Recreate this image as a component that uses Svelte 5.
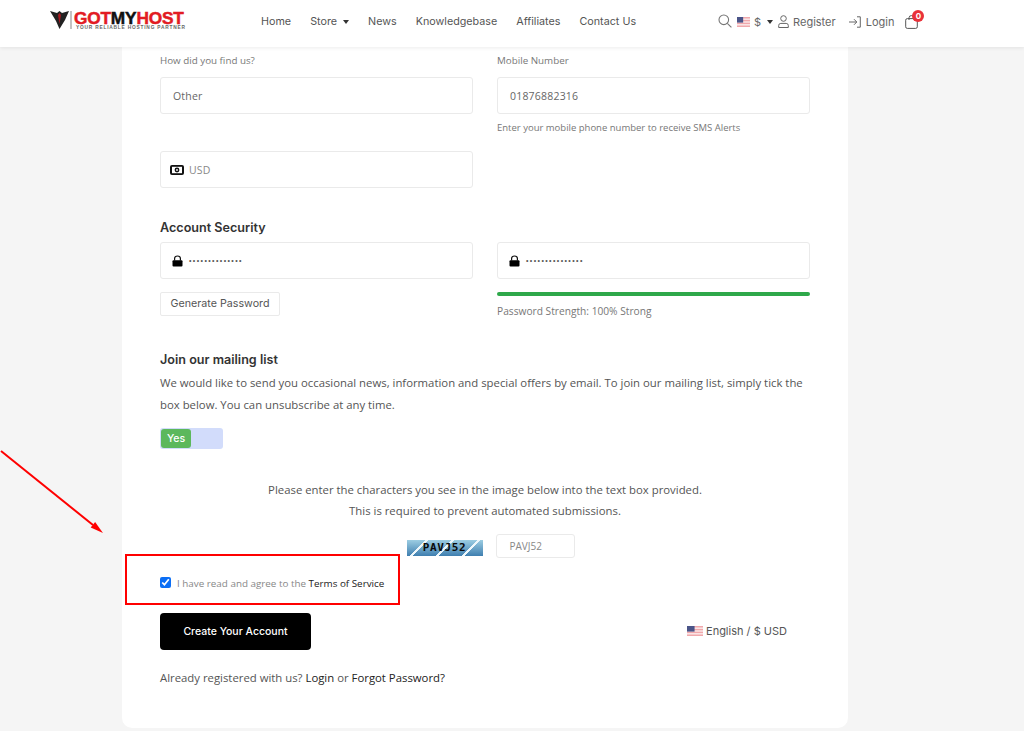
<script>
  const nav = ['Home', 'Store', 'News', 'Knowledgebase', 'Affiliates', 'Contact Us'];
</script>

<svelte:head><title>Register</title></svelte:head>

{#snippet flag(w, h)}
  <svg class="flag" width={w} height={h} viewBox="0 0 19 10" preserveAspectRatio="none">
    <rect width="19" height="10" fill="#f0a8ac"/>
    <rect y="1.5" width="19" height="1.4" fill="#fbe9ea"/>
    <rect y="4.3" width="19" height="1.4" fill="#fbe9ea"/>
    <rect y="7.1" width="19" height="1.4" fill="#fbe9ea"/>
    <rect width="9" height="5.6" fill="#4a5488"/>
  </svg>
{/snippet}

{#snippet lock()}
  <svg width="11" height="12" viewBox="0 0 11 12"><path d="M2.6 5.5 V3.6 Q2.6 1 5.5 1 Q8.4 1 8.4 3.6 V5.5" fill="none" stroke="#111" stroke-width="1.2"/><rect x=".5" y="5.2" width="10" height="6.3" rx="1" fill="#000"/></svg>
{/snippet}

<div class="page">
  <header>
    <div class="logo">
      <svg width="22" height="20" viewBox="0 0 22 20">
        <path d="M0 1 L7 3 L9.500 1 L12 3 L19 1 L15 10 L9.500 19 L6 11 Z" fill="#222"/>
        <path d="M8 5 L9.500 3 L11 5 L9.500 14 Z" fill="#a81a20"/>
        <rect x="20.500" y="1" width="1" height="18" fill="#888"/>
      </svg>
      <div class="wordmark">
        <div class="name"><span class="r">GOT</span><span class="k">MY</span><span class="r">HOST</span></div>
        <div class="tag">YOUR RELIABLE HOSTING PARTNER</div>
      </div>
    </div>
    <nav>
      {#each nav as item}
        <span class="nav-item">{item}{#if item === 'Store'}<i class="caret"></i>{/if}</span>
      {/each}
    </nav>
    <div class="tools">
      <svg class="search" width="14" height="14" viewBox="0 0 14 14" fill="none" stroke="#777" stroke-width="1.1"><circle cx="5.8" cy="5.8" r="4.8"/><path d="M9.3 9.3 L13.4 13.4"/></svg>
      <span class="cur">{@render flag(13, 10)}<span>$</span><i class="caret"></i></span>
      <span class="tool reg">
        <svg width="11" height="13" viewBox="0 0 11 13" fill="none" stroke="#666" stroke-width="1"><circle cx="5.5" cy="3.5" r="2.8"/><path d="M.7 12.5 V10.5 Q.7 8.4 2.8 8.4 H8.2 Q10.3 8.4 10.3 10.5 V12.5 Z"/></svg>
        Register
      </span>
      <span class="tool login">
        <svg width="12" height="12" viewBox="0 0 12 12" fill="none" stroke="#666" stroke-width="1"><path d="M0 6 H7.5 M5 3.2 L7.8 6 L5 8.8 M8 .8 H11.3 V11.2 H8"/></svg>
        Login
      </span>
      <span class="cart">
        <svg width="13" height="14" viewBox="0 0 13 14" fill="none" stroke="#555" stroke-width="1"><rect x=".7" y="3.6" width="11.6" height="9.8" rx="1.6"/><path d="M4 5 V2.8 Q4 .6 6.5 .6 Q9 .6 9 2.8 V5"/></svg>
        <b class="badge">0</b>
      </span>
    </div>
  </header>

  <main class="card">
    <div class="grid two first">
      <div>
        <div class="label">How did you find us?</div>
        <div class="input">Other</div>
      </div>
      <div>
        <div class="label">Mobile Number</div>
        <div class="input">01876882316</div>
        <div class="help">Enter your mobile phone number to receive SMS Alerts</div>
      </div>
    </div>

    <div class="grid two usd-row">
      <div class="input icon muted">
        <svg width="14" height="10" viewBox="0 0 14 10"><rect width="14" height="10" rx="2" fill="#111"/><rect x="2" y="1.800" width="10" height="6.400" fill="#fff"/><circle cx="7" cy="5" r="2.400" fill="#111"/><circle cx="7" cy="5" r=".9" fill="#fff"/></svg>
        USD
      </div>
    </div>

    <h3 class="security">Account Security</h3>
    <div class="grid two">
      <div>
        <div class="input icon pw">
          {@render lock()}
          <span class="dots">••••••••••••••</span>
        </div>
        <div class="gen">Generate Password</div>
      </div>
      <div>
        <div class="input icon pw">
          {@render lock()}
          <span class="dots">•••••••••••••••</span>
        </div>
        <div class="bar"></div>
        <div class="strength">Password Strength: 100% Strong</div>
      </div>
    </div>

    <h3 class="mailing">Join our mailing list</h3>
    <p class="para">We would like to send you occasional news, information and special offers by email. To join our mailing list, simply tick the box below. You can unsubscribe at any time.</p>
    <div class="toggle"><span>Yes</span></div>

    <div class="prompt">
      <div>Please enter the characters you see in the image below into the text box provided.</div>
      <div>This is required to prevent automated submissions.</div>
    </div>

    <div class="captcha">
      <div class="cap-img"><span>PAVJ52</span></div>
      <div class="cap-input">PAVJ52</div>
    </div>

    <label class="tos">
      <input type="checkbox" checked />
      <span>I have read and agree to the <em>Terms of Service</em></span>
    </label>

    <div class="actions">
      <div class="create">Create Your Account</div>
      <div class="lang">{@render flag(16, 10)}<span>English / $ USD</span></div>
    </div>

    <div class="already">Already registered with us? <em>Login</em> or <em>Forgot Password?</em></div>
  </main>

  <div class="mark-box"></div>
  <svg class="arrow" width="110" height="90" viewBox="0 0 110 90">
    <path d="M1 1 L93 75" stroke="#f00" stroke-width="2"/>
    <path d="M103 83 L90.700 77.500 L95.100 72.100 Z" fill="#f00"/>
  </svg>
</div>

<style>
  :global(body) { margin: 0; background: #f5f5f5; }
  .page {
    position: relative;
    height: 731px;
    overflow: hidden;
    background: #f5f5f5;
    font-family: "Open Sans", sans-serif;
    color: #555;
  }
  header {
    height: 47px;
    background: #fff;
    box-shadow: 0 1px 4px rgba(0,0,0,.08);
    display: flex;
    align-items: center;
    padding-left: 50px;
    padding-bottom: 4px;
    box-sizing: border-box;
    font-family: Inter, sans-serif;
    position: relative;
    z-index: 1;
  }
  .logo { display: flex; align-items: center; gap: 2px; width: 211px; flex: none; margin-top: -3px; }
  .wordmark { line-height: 1; }
  .name { font: 900 17.3px/14px "Liberation Sans", sans-serif; -webkit-text-stroke: .5px; letter-spacing: -.2px; }
  .r { color: #e21b23; }
  .k { color: #111; }
  .tag { font: 700 4.8px/5px "Liberation Sans", sans-serif; color: #666; letter-spacing: .8px; white-space: nowrap; margin-left: 2px; }
  nav { display: flex; gap: 19px; font-size: 10.75px; color: #555; width: 457px; flex: none; }
  .nav-item { white-space: nowrap; }
  .caret {
    display: inline-block;
    width: 0; height: 0;
    border: 3.5px solid transparent;
    border-top: 4px solid #333;
    border-bottom: 0;
    margin-left: 6px;
    vertical-align: middle;
  }
  .tools { display: flex; align-items: center; font-size: 11px; color: #666; }
  .search { margin-right: 5px; margin-top: -2px; }
  .cur { display: inline-flex; align-items: center; gap: 4px; margin-right: 5px; }
  .cur .caret { margin-left: 2px; }
  .flag { display: block; }
  .tool { display: inline-flex; align-items: center; gap: 4px; white-space: nowrap; }
  .reg { margin-right: 13px; }
  .login { margin-right: 11px; gap: 5px; }
  .cart { position: relative; display: inline-flex; }
  .badge {
    position: absolute; left: 7px; top: -5px;
    width: 12px; height: 12px; border-radius: 50%;
    background: #e9323a; color: #fff;
    font: 700 8px/12px Inter, sans-serif; text-align: center;
  }

  .card {
    width: 726px;
    height: 681px;
    margin-left: 122px;
    padding: 0 38px;
    box-sizing: border-box;
    background: #fff;
    border-radius: 0 0 10px 10px;
    font-size: 11.35px;
  }
  .grid.two { display: grid; grid-template-columns: 313px 313px; column-gap: 24px; }
  .first { padding-top: 7px; }
  .label { font-size: 9.8px; line-height: 14px; color: #777; margin-bottom: 9px; }
  .input {
    height: 37px;
    box-sizing: border-box;
    border: 1px solid #eaeaea;
    border-radius: 3px;
    padding: 0 12px;
    display: flex;
    align-items: center;
    font-size: 10.5px;
    color: #666;
    letter-spacing: .2px;
  }
  .input.icon { gap: 5px; padding-left: 9px; }
  .input.pw { gap: 6px; padding-left: 11px; }
  .muted { color: #888; }
  .help { font-size: 9.5px; line-height: 14px; color: #777; margin-top: 7px; }
  .usd-row { margin-top: 16px; }
  h3 {
    font-family: Inter, sans-serif;
    font-size: 12.6px;
    font-weight: 600;
    color: #333;
    margin: 0;
    line-height: 16px;
  }
  .security { margin-top: 32px; margin-bottom: 6px; }
  .dots { font-size: 7px; letter-spacing: 1.4px; color: #555; font-family: "Liberation Sans", sans-serif; }
  .gen {
    margin-top: 13px;
    width: 120px;
    height: 24px;
    box-sizing: border-box;
    border: 1px solid #eaeaea;
    border-radius: 2px;
    font: 400 10.7px/22px Inter, sans-serif;
    color: #555;
    text-align: center;
  }
  .bar { height: 4px; background: #2ea84a; border-radius: 2px; margin-top: 13px; }
  .strength { font-size: 10.2px; line-height: 14px; color: #777; margin-top: 8px; }
  .mailing { margin-top: 34px; }
  .para { margin: 4px 0 0; line-height: 22px; font-size: 11.35px; color: #555; }
  .toggle {
    margin-top: 12px;
    width: 63px;
    height: 21px;
    box-sizing: border-box;
    background: #d2dcfb;
    border-radius: 3px;
    padding: 1px;
  }
  .toggle span {
    display: block;
    width: 30px;
    height: 19px;
    background: #5cb85c;
    border-radius: 3px;
    color: #fff;
    font: 500 10.5px/19px Inter, sans-serif;
    text-align: center;
  }
  .prompt { margin-top: 30px; text-align: center; line-height: 21px; font-size: 11.35px; color: #555; }
  .captcha { display: flex; justify-content: center; gap: 13px; margin-top: 13px; align-items: center; padding-left: 11px; }
  .cap-img {
    width: 76px;
    height: 16px;
    margin-top: 4px;
    background:
      linear-gradient(135deg, transparent 44%, #eef7fb 44%, #eef7fb 51%, transparent 51%) 0 0 / 26px 16px,
      linear-gradient(180deg, #9ccde2, #3f7fb0);
    display: flex; align-items: center; justify-content: center;
  }
  .cap-img span { font: 700 11px/16px "DejaVu Sans Mono", monospace; color: #0a0a0a; letter-spacing: .6px; }
  .cap-input {
    width: 79px;
    height: 24px;
    box-sizing: border-box;
    border: 1px solid #eaeaea;
    border-radius: 3px;
    padding-left: 13px;
    font-size: 10px;
    line-height: 22px;
    color: #888;
  }
  .tos { display: flex; align-items: center; gap: 6px; margin-top: 15px; height: 18px; font-size: 9.85px; color: #888; }
  .tos input { width: 11px; height: 11px; margin: 0; accent-color: #0b6ef5; }
  .tos span { position: relative; top: 1px; }
  em { font-style: normal; color: #222; }
  .actions { display: flex; justify-content: space-between; align-items: center; margin-top: 22px; }
  .create {
    width: 151px;
    height: 37px;
    background: #000;
    border-radius: 4px;
    color: #fff;
    font: 500 10.5px/37px Inter, sans-serif;
    text-align: center;
  }
  .lang { display: flex; align-items: center; gap: 3px; font: 400 11px/14px Inter, sans-serif; color: #555; margin-right: 23px; margin-bottom: 2px; }
  .already { margin-top: 20px; font-size: 11.35px; line-height: 16px; color: #555; }

  .mark-box {
    position: absolute;
    left: 125px; top: 554px;
    width: 275px; height: 51px;
    box-sizing: border-box;
    border: 2px solid #f00;
  }
  .arrow { position: absolute; left: 0; top: 450px; }
</style>
